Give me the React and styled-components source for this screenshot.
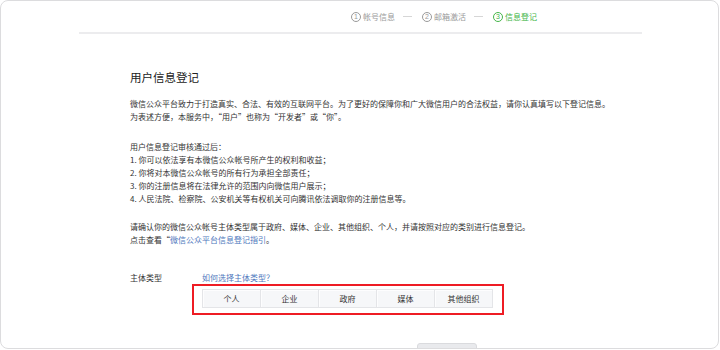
import React from 'react';
import styled, { createGlobalStyle } from 'styled-components';

const Global = createGlobalStyle`
  html, body {
    margin: 0;
    padding: 0;
    background: #fff;
  }
  body {
    font-family: "Noto Sans CJK SC", "Liberation Sans", sans-serif;
    color: #333;
  }
`;

const Card = styled.div`
  box-sizing: border-box;
  width: 719px;
  height: 349px;
  border: 1px solid #dcdcde;
  border-radius: 8px;
  overflow: hidden;
  background: #fff;
`;

const Steps = styled.div`
  display: flex;
  align-items: center;
  height: 31px;
  padding-left: 350px;
  font-size: 8px;
`;

const Step = styled.div`
  display: flex;
  align-items: center;
  gap: 2px;
  color: ${p => (p.$active ? '#44b549' : '#9a9a9a')};
`;

const Num = styled.span`
  box-sizing: border-box;
  width: 10px;
  height: 10px;
  border: 1px solid currentColor;
  border-radius: 50%;
  display: flex;
  align-items: center;
  justify-content: center;
  font-family: "Liberation Sans", sans-serif;
  font-size: 7px;
  line-height: 1;
`;

const Dash = styled.span`
  width: 9px;
  height: 1px;
  background: #d6d6d6;
  margin: 0 10px 0 8px;
`;

const Rule = styled.div`
  height: 2px;
  margin: 0 76px 0 78px;
  background: #ececee;
`;

const Content = styled.div`
  padding: 35px 0 0 129px;
`;

const Title = styled.h2`
  margin: 0;
  font-size: 11.5px;
  line-height: 16px;
  font-weight: 400;
  color: #222;
`;

const Para = styled.p`
  margin: ${p => p.$gap}px 0 0;
  font-size: 8px;
  line-height: 13px;
  white-space: nowrap;
`;

const Link = styled.a`
  color: #4f78bd;
  text-decoration: none;
`;

const Field = styled.div`
  display: flex;
  margin-top: 25px;
  font-size: 8px;
  line-height: 13px;
`;

const Label = styled.div`
  width: 72px;
  flex: none;
`;

const Mark = styled.div`
  width: 312px;
  height: 31px;
  box-sizing: border-box;
  margin-left: -10px;
  border: 2px solid #ee1c24;
  padding: 3px 0 0 8px;
`;

const Segments = styled.div`
  display: flex;
  width: 291px;
  height: 19px;
  box-sizing: border-box;
  border: 1px solid #e4e5e8;
  background: #f6f7f9;
`;

const Segment = styled.div`
  flex: 1;
  display: flex;
  align-items: center;
  justify-content: center;
  font-size: 8px;
  color: #353535;
  box-shadow: inset 1px 1px 0 #fdfdfe;
  & + & {
    border-left: 1px solid #e4e5e8;
  }
`;

const Footer = styled.div`
  display: flex;
  margin-top: 28px;
  padding-left: 287px;
`;

const Button = styled.button`
  width: 60px;
  height: 22px;
  border: 1px solid #dadbde;
  border-radius: 3px;
  background: #e9eaed;
`;

const types = ['个人', '企业', '政府', '媒体', '其他组织'];

const App = () => {
  return (
    <>
      <Global />
      <Card>
        <Steps>
          <Step><Num>1</Num>帐号信息</Step>
          <Dash />
          <Step><Num>2</Num>邮箱激活</Step>
          <Dash />
          <Step $active><Num>3</Num>信息登记</Step>
        </Steps>
        <Rule />
        <Content>
          <Title>用户信息登记</Title>
          <Para $gap={12}>
            微信公众平台致力于打造真实、合法、有效的互联网平台。为了更好的保障你和广大微信用户的合法权益，请你认真填写以下登记信息。
            <br />
            为表述方便，本服务中，“用户”也称为“开发者”或“你”。
          </Para>
          <Para $gap={17}>
            用户信息登记审核通过后：
            <br />
            1. 你可以依法享有本微信公众帐号所产生的权利和收益；
            <br />
            2. 你将对本微信公众帐号的所有行为承担全部责任；
            <br />
            3. 你的注册信息将在法律允许的范围内向微信用户展示；
            <br />
            4. 人民法院、检察院、公安机关等有权机关可向腾讯依法调取你的注册信息等。
          </Para>
          <Para $gap={15}>
            请确认你的微信公众帐号主体类型属于政府、媒体、企业、其他组织、个人，并请按照对应的类别进行信息登记。
            <br />
            点击查看“<Link href="#">微信公众平台信息登记指引</Link>。
          </Para>
          <Field>
            <Label>主体类型</Label>
            <div>
              <Link href="#">如何选择主体类型？</Link>
              <Mark>
                <Segments>
                  {types.map(t => (
                    <Segment key={t}>{t}</Segment>
                  ))}
                </Segments>
              </Mark>
            </div>
          </Field>
          <Footer>
            <Button disabled aria-label="下一步" />
          </Footer>
        </Content>
      </Card>
    </>
  );
};

export default App;
